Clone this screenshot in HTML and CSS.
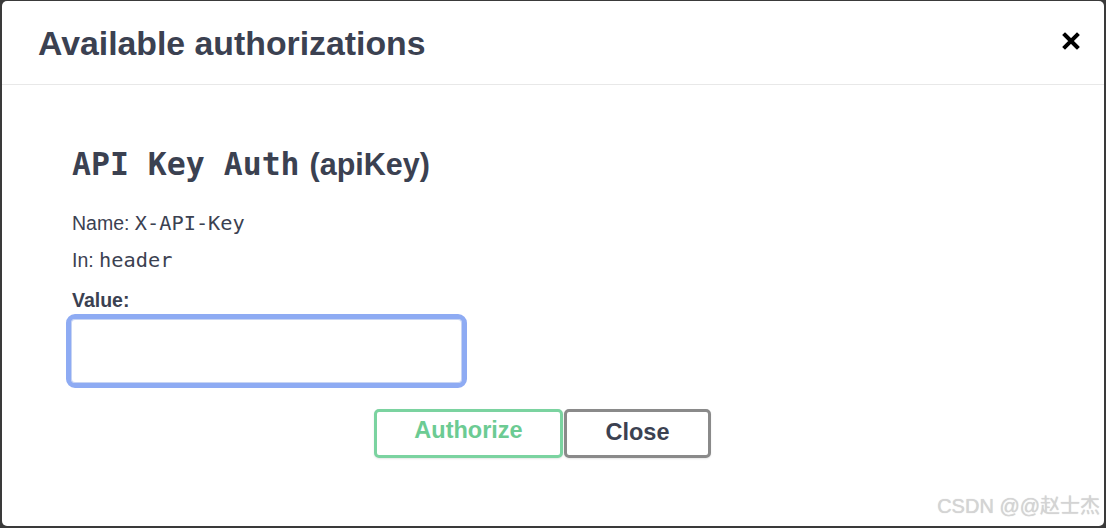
FILE: index.html
```html
<!DOCTYPE html>
<html>
<head>
<meta charset="utf-8">
<link rel="stylesheet" href="styles.css">
</head>
<body>
<div class="dialog">
  <div class="header">
    <h3 class="title">Available authorizations</h3>
    <button class="x-btn" aria-label="Close">
      <svg width="18" height="18" viewBox="0 0 18 18"><path d="M3 3 L15 15 M15 3 L3 15" stroke="#000" stroke-width="4" stroke-linecap="square" fill="none"/></svg>
    </button>
  </div>
  <div class="content">
    <h4 class="auth-title"><span class="mono">API Key Auth</span><span class="sans">(apiKey)</span></h4>
    <p class="meta name">Name: <code>X-API-Key</code></p>
    <p class="meta in">In: <code>header</code></p>
    <label class="label">Value:</label>
    <input class="value-input" type="text">
  </div>
  <div class="btn-row">
    <button class="btn authorize">Authorize</button>
    <button class="btn close">Close</button>
  </div>
  <div class="watermark">CSDN @@赵士杰</div>
</div>
</body>
</html>
```
FILE: styles.css
```css
html, body {
  margin: 0;
  padding: 0;
}
body {
  background: #3a3a3a;
  width: 1106px;
  height: 528px;
  padding: 1px 2px 2px 2px;
  box-sizing: border-box;
  font-family: "Liberation Sans", Arial, sans-serif;
  color: #3b4151;
}
.dialog {
  position: relative;
  background: #fff;
  width: 1102px;
  height: 525px;
  border-radius: 5px;
  overflow: hidden;
}
.header {
  height: 83px;
  border-bottom: 1px solid #e8e8e8;
  display: flex;
  align-items: center;
  justify-content: space-between;
  padding: 0 24px 0 36px;
}
.title {
  margin: 0;
  font-size: 33.8px;
  font-weight: 700;
  color: #3b4151;
  line-height: 40px;
  padding-top: 1px;
}
.x-btn {
  border: 0;
  background: none;
  padding: 0;
  width: 18px;
  height: 18px;
  margin-top: -4px;
  display: flex;
}
.content {
  padding: 61px 0 0 70px;
}
.auth-title {
  margin: 0;
  line-height: 36px;
  color: #3b4151;
}
.auth-title .mono {
  font-family: "DejaVu Sans Mono", monospace;
  font-size: 31.5px;
  font-weight: 700;
}
.auth-title .sans {
  font-family: "Liberation Sans", Arial, sans-serif;
  font-size: 30.5px;
  font-weight: 700;
  margin-left: 10px;
}
.meta {
  margin: 0;
  font-size: 19.5px;
  line-height: 24px;
  color: #3b4151;
}
.meta.name {
  margin-top: 23px;
}
.meta.in {
  margin-top: 13px;
}
.meta code {
  font-family: "DejaVu Sans Mono", monospace;
  font-size: 20.3px;
}
.label {
  display: block;
  margin-top: 16px;
  font-size: 19.5px;
  font-weight: 700;
  line-height: 24px;
}
.value-input {
  display: block;
  margin: 2px 0 0 -6px;
  width: 401px;
  height: 74px;
  box-sizing: border-box;
  border: 5px solid #8eabf3;
  border-radius: 9px;
  background: #fff;
  outline: none;
  box-shadow: inset 0 0 0 1px #c7d4f3;
}
.btn-row {
  display: flex;
  justify-content: center;
  margin-top: 21px;
}
.btn {
  height: 49px;
  box-sizing: border-box;
  border-radius: 5px;
  background: #fff;
  font-family: "Liberation Sans", Arial, sans-serif;
  font-size: 23.5px;
  font-weight: 700;
  padding: 0;
}
.authorize {
  width: 189px;
  border: 3px solid #7bd3a0;
  color: #6ccb93;
  padding-bottom: 6px;
  box-shadow: 0 1px 2px rgba(0,0,0,0.1);
}
.close {
  width: 147px;
  margin-left: 1px;
  margin-right: 21px;
  border: 3px solid #8a8a8a;
  color: #3b4151;
  padding-bottom: 2px;
  box-shadow: 0 1px 2px rgba(0,0,0,0.1);
}
.watermark {
  position: absolute;
  right: 4px;
  bottom: 8px;
  font-family: "Liberation Sans", "Noto Sans CJK SC", sans-serif;
  font-size: 20px;
  color: #d4d4d4;
  text-shadow: 0 0 1px rgba(0,0,0,0.2);
  line-height: 24px;
}
```
